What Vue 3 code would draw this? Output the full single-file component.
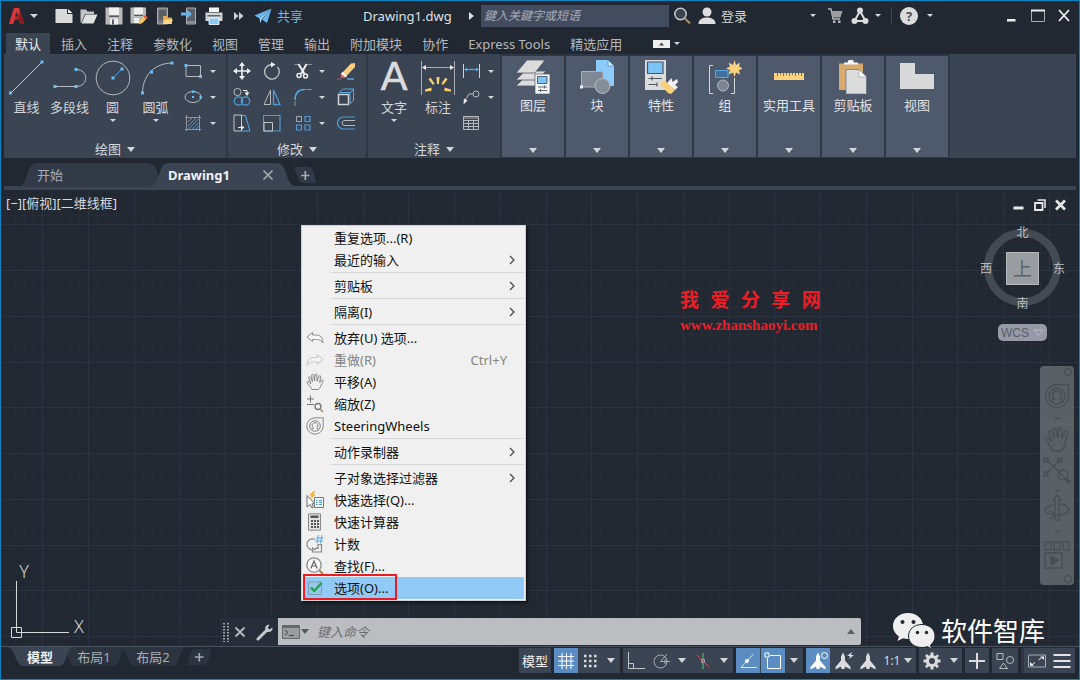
<script setup>
const ribbonTabs = ['默认', '插入', '注释', '参数化', '视图', '管理', '输出', '附加模块', '协作', 'Express Tools', '精选应用']

const quickTools = [
  { icon: 'new', label: '新建' },
  { icon: 'open', label: '打开' },
  { icon: 'save', label: '保存' },
  { icon: 'saveas', label: '另存为' },
  { icon: 'webopen', label: '从 Web 打开' },
  { icon: 'websave', label: '保存到 Web' },
  { icon: 'print', label: '打印' },
]

const drawTools = [
  { icon: 'line', label: '直线' },
  { icon: 'pline', label: '多段线' },
  { icon: 'circle', label: '圆', more: true },
  { icon: 'arc', label: '圆弧', more: true },
]
const drawSmall = ['rect', 'ellipse', 'hatch']

const modifyTools = [
  'move', 'rotate', 'trim', 'caret', 'erase',
  'copy', 'mirror', 'fillet', 'caret', 'explode',
  'stretch', 'scale', 'array', 'caret', 'offset',
]

const panels = [
  { icon: 'layers', label: '图层' },
  { icon: 'block', label: '块' },
  { icon: 'props', label: '特性' },
  { icon: 'group', label: '组' },
  { icon: 'ruler', label: '实用工具' },
  { icon: 'clip', label: '剪贴板' },
  { icon: 'view', label: '视图' },
]

const menu = [
  { label: '重复选项...(R)' },
  { label: '最近的输入', sub: true },
  { sep: true },
  { label: '剪贴板', sub: true },
  { sep: true },
  { label: '隔离(I)', sub: true },
  { sep: true },
  { label: '放弃(U) 选项...', icon: 'undo' },
  { label: '重做(R)', icon: 'redo', key: 'Ctrl+Y', off: true },
  { label: '平移(A)', icon: 'pan' },
  { label: '缩放(Z)', icon: 'zoom' },
  { label: 'SteeringWheels', icon: 'wheel' },
  { sep: true },
  { label: '动作录制器', sub: true },
  { sep: true },
  { label: '子对象选择过滤器', sub: true },
  { label: '快速选择(Q)...', icon: 'qselect' },
  { label: '快速计算器', icon: 'calc' },
  { label: '计数', icon: 'count' },
  { label: '查找(F)...', icon: 'find' },
  { label: '选项(O)...', icon: 'check', active: true },
]

const STEP = 9.15
function gridPath(major) {
  let d = ''
  for (let k = -4; k < 300; k++) {
    if ((k % 5 === 0) !== major) continue
    d += `M${Math.round(41.3 + k * STEP) + 0.5} 0V2000`
    d += `M0 ${Math.round(34.4 + k * STEP) + 0.5}H3000`
  }
  return d
}
const minorGrid = gridPath(false)
const majorGrid = gridPath(true)
</script>

<template>
  <div class="window">
    <svg class="defs" aria-hidden="true">
      <symbol id="logo" viewBox="0 0 16 18">
        <path d="M5 1H10L15.500 17H11L9.500 12.500H6L4 17H0Z" fill="#b3262b" />
        <path d="M5 1H10L11 5L7 9L4 17H0Z" fill="#d8383c" />
        <path d="M7.500 4.500L9 9.500H6Z" fill="#212831" />
        <path d="M11 5L15.500 17H11L9.500 12Z" fill="#8c1a20" />
      </symbol>
      <symbol id="new" viewBox="0 0 18 18">
        <path d="M.5 2H12V7H17.500V16H.5Z" fill="#d9d9d9" /><path d="M13 2L17.500 6H13Z" fill="#f2f2f2" />
      </symbol>
      <symbol id="open" viewBox="0 0 18 18">
        <path d="M.5 2.500H6L7.500 4.500H14V7H5L1.500 15.500H.5Z" fill="#c4c4c4" /><path d="M5.500 7.500H17.500L13.500 16.500H1.500Z" fill="#e2e2e2" />
      </symbol>
      <symbol id="save" viewBox="0 0 18 18">
        <path d="M.5 .5H17.500V17.500H.5Z" fill="#b9b9b9" /><path d="M4 .5H14V8H4ZM5 11.500H13V17.500H5Z" fill="#f0f0f0" /><path d="M4 8.500H14V10H4ZM7 12.500H9V17.500H7Z" fill="#5a5d62" />
      </symbol>
      <symbol id="saveas" viewBox="0 0 18 18">
        <path d="M.5 .5H16V9L9 16.500H.5Z" fill="#b9b9b9" /><path d="M4 .5H13V7H4ZM4 11H9V16H4Z" fill="#f0f0f0" /><path d="M4 8H13V9H4Z" fill="#5a5d62" />
        <path d="M8.500 17.500L10 13.500L15 8L17.500 10.500L12.500 16Z" fill="#f3c35f" /><path d="M15 8L17.500 10.500L16 12L13.500 9.500Z" fill="#e5484d" />
      </symbol>
      <symbol id="webopen" viewBox="0 0 18 18">
        <path d="M2.500 1H12.500V17H2.500Z" fill="#777a7e" stroke="#a9abae" /><path d="M4 3H11V13H4Z" fill="#5c5f64" />
        <path d="M8 9H12L13 10.500H17V17H8Z" fill="#e0a94e" /><path d="M10 12.500H18L16 17H8Z" fill="#ffd98a" />
      </symbol>
      <symbol id="websave" viewBox="0 0 18 18">
        <path d="M6.500 1H15.500V17H6.500Z" fill="#5c5f64" stroke="#a9abae" /><path d="M7 14H15V16.500H7Z" fill="#898c90" />
        <path d="M1 5.500H7V2.500L12 7L7 11.500V8.500H1Z" fill="#64b4ee" />
      </symbol>
      <symbol id="print" viewBox="0 0 18 18">
        <path d="M4 .5H14V5H4Z" fill="#f4f4f4" /><path d="M.5 5.500H17.500V14H.5Z" fill="#d3d3d3" /><path d="M2.500 8H15.500V9.500H2.500Z" fill="#62666c" /><path d="M4 11H14V17.500H4Z" fill="#8cc8f4" stroke="#fff" stroke-width=".8" />
      </symbol>
      <symbol id="plane" viewBox="0 0 18 16">
        <path d="M.5 7.500L17.500 .5L5.500 10.500Z" fill="#65b5f2" /><path d="M17.500 .5L13 15L8 11.500Z" fill="#65b5f2" /><path d="M5.500 10.500L17 1L7.500 11.500L6.500 15.500Z" fill="#a7d4f7" />
      </symbol>

      <symbol id="line" viewBox="0 0 36 36">
        <path d="M2 33L33 2" stroke="#c6c8cb" fill="none" /><path d="M0 31.500H3V34.500H0ZM31.500 .5H34.500V3.500H31.500Z" fill="#69bdf8" />
      </symbol>
      <symbol id="pline" viewBox="0 0 36 36">
        <path d="M3 26.500H24C37 26.500 37 9.500 24 9.500" stroke="#b6b9bd" fill="none" /><path d="M1.500 25H4.500V28H1.500ZM22.500 25H25.500V28H22.500ZM22.500 8H25.500V11H22.500Z" fill="#69bdf8" />
      </symbol>
      <symbol id="circle" viewBox="0 0 36 36">
        <circle cx="18" cy="18" r="16.800" stroke="#b6b9bd" fill="none" /><path d="M18 18L27 9" stroke="#4a9bd8" /><path d="M16.500 16.500H19.500V19.500H16.500ZM25.500 7.500H28.500V10.500H25.500Z" fill="#69bdf8" />
      </symbol>
      <symbol id="arc" viewBox="0 0 36 36">
        <path d="M4.500 33C4.500 18 14 3.500 34 3" stroke="#b6b9bd" fill="none" /><path d="M3 31.500H6V34.500H3ZM12 10.500H15V13.500H12ZM32.500 1.500H35.500V4.500H32.500Z" fill="#69bdf8" />
      </symbol>
      <symbol id="rect" viewBox="0 0 18 18">
        <path d="M2 3.500H16.500V14.500H2Z" stroke="#b6b9bd" fill="none" /><path d="M.5 2H3.500V5H.5ZM15 13H18V16H15Z" fill="#69bdf8" />
      </symbol>
      <symbol id="ellipse" viewBox="0 0 18 18">
        <ellipse cx="9" cy="9" rx="8" ry="5.500" stroke="#b6b9bd" fill="none" /><path d="M8 8H10V10H8ZM8 2.500H10.500V5H8ZM15.500 8H18V10.500H15.500Z" fill="#69bdf8" />
      </symbol>
      <symbol id="hatch" viewBox="0 0 18 18">
        <path d="M2.500 1V17M15.500 1V17M1 3.500H17M1 15.500H17" stroke="#90959c" /><path d="M4 8L8 4M4 12L12 4M4.500 15L14.500 5M8.500 15L14.500 9M12 15L14.500 12.500" stroke="#4f9bd6" />
      </symbol>
      <symbol id="move" viewBox="0 0 18 18">
        <path d="M9 2V16M2 9H16" stroke="#f0f0f0" stroke-width="1.600" /><path d="M9 0L12 4H6ZM9 18L6 14H12ZM0 9L4 6V12ZM18 9L14 12V6Z" fill="#f0f0f0" />
      </symbol>
      <symbol id="rotate" viewBox="0 0 18 18">
        <path d="M14.500 5A7.300 7.300 0 1 1 8 2.500" stroke="#c3c5c8" fill="none" stroke-width="1.300" /><path d="M8 0L12.500 2.500L8 5.500Z" fill="#f0f0f0" />
      </symbol>
      <symbol id="trim" viewBox="0 0 18 18">
        <path d="M.5 2.500H5M12 2.500H18" stroke="#8b9098" /><path d="M4.500 2L10.500 12M12.500 2L7 12" stroke="#eee" stroke-width="2" /><circle cx="5" cy="13.500" r="2" fill="none" stroke="#eee" stroke-width="1.500" /><circle cx="11.500" cy="14" r="2" fill="none" stroke="#eee" stroke-width="1.500" />
      </symbol>
      <symbol id="erase" viewBox="0 0 18 18">
        <path d="M0 17H4" stroke="#b55" /><path d="M10 17H17" stroke="#57a8e3" stroke-width="1.500" /><path d="M5 11L14 1.500L18 1V5L9 14.500Z" fill="#f6cf7e" /><path d="M3.500 12.500L5 11L9 14.500L7 16H4Z" fill="#ef5a5a" /><path d="M5.500 10L10 14L8.500 15.500L4 11.500Z" fill="#fff" />
      </symbol>
      <symbol id="copy" viewBox="0 0 18 18">
        <circle cx="4.500" cy="4" r="3.600" stroke="#b6b9bd" fill="none" /><circle cx="5.500" cy="13" r="4.200" stroke="#4f9bd6" fill="none" stroke-width="1.300" /><circle cx="12.500" cy="13" r="4.200" stroke="#4f9bd6" fill="none" stroke-width="1.300" /><path d="M10 2.500H14V5" stroke="#eee" fill="none" /><path d="M11.500 4.500H16.500L14 8Z" fill="#eee" />
      </symbol>
      <symbol id="mirror" viewBox="0 0 18 18">
        <path d="M7.500 2V16.500H1Z" stroke="#b6b9bd" fill="none" /><path d="M10.500 2V16.500H17Z" stroke="#4f9bd6" fill="none" stroke-width="1.300" />
      </symbol>
      <symbol id="fillet" viewBox="0 0 18 18">
        <path d="M1 12C1 5 5 1.500 11 1.500" stroke="#57a8e3" fill="none" stroke-width="1.500" /><path d="M12 1.500H17.500M1 13V18" stroke="#8b9098" />
      </symbol>
      <symbol id="explode" viewBox="0 0 18 18">
        <path d="M1.500 6.500H11.500V16.500H1.500Z" stroke="#d0d2d4" fill="none" stroke-width="1.500" /><path d="M1.500 5L6 1H16.500V12L13 16M13 5L16.500 1M3 4.500H13V15" stroke="#57a8e3" fill="none" />
      </symbol>
      <symbol id="stretch" viewBox="0 0 18 18">
        <path d="M8.500 1H1V17H8.500ZM8.500 1V12" stroke="#c3c5c8" fill="none" /><path d="M9 1.500H12.500L17 17H9" stroke="#57a8e3" fill="none" /><path d="M5 13.500H9" stroke="#eee" /><path d="M8 11L11.500 13.500L8 16Z" fill="#eee" />
      </symbol>
      <symbol id="scale" viewBox="0 0 18 18">
        <path d="M.5 1.500H17V17H.5Z" stroke="#4f9bd6" fill="none" stroke-width="1.200" /><path d="M1 8.500H9.500V17H1Z" stroke="#c3c5c8" fill="none" />
      </symbol>
      <symbol id="array" viewBox="0 0 18 18">
        <path d="M2.500 2.500H7.500V7.500H2.500Z" stroke="#a6aab0" fill="none" /><path d="M11 2.500H16V7.500H11ZM2.500 11H7.500V16H2.500ZM11 11H16V16H11Z" stroke="#4f9bd6" fill="none" stroke-width="1.200" />
      </symbol>
      <symbol id="offset" viewBox="0 0 18 18">
        <path d="M18 3H6.500A6 6 0 0 0 6.500 15H18" stroke="#4f9bd6" fill="none" stroke-width="1.200" /><path d="M18 6.500H7A2.600 2.600 0 0 0 7 11.500H18" stroke="#b6b9bd" fill="none" />
      </symbol>

      <symbol id="dim" viewBox="0 0 36 36">
        <path d="M1.500 1V35M34.500 1V35M3 7.500H33" stroke="#a9adb2" fill="none" /><path d="M2 7.500L6 5V10ZM34 7.500L30 5V10Z" fill="#eee" />
        <g fill="#f9cd6c"><path d="M16.500 17H19.500L19 24H17Z" /><path d="M8.500 19.500L10.500 17.500L14.500 23.500L13 25Z" /><path d="M27.500 19.500L25.500 17.500L21.500 23.500L23 25Z" /><path d="M5 31.500V29.500L11.500 27.500V31Z" /><path d="M31 31.500V29.500L24.500 27.500V31Z" /></g>
      </symbol>
      <symbol id="dimlin" viewBox="0 0 18 18">
        <path d="M1.500 2V16M17.500 2V16" stroke="#d0d2d4" /><path d="M3 7.500H16" stroke="#57a8e3" stroke-width="1.300" /><path d="M2 7.500L5 5.500V9.500ZM17 7.500L14 5.500V9.500Z" fill="#57a8e3" />
      </symbol>
      <symbol id="leader" viewBox="0 0 18 18">
        <path d="M2 14L7 6H11" stroke="#b6b9bd" fill="none" /><circle cx="14" cy="6" r="3" stroke="#b6b9bd" fill="none" /><path d="M1.500 16.500L2 10.500L5.500 12.500Z" fill="#eee" />
      </symbol>
      <symbol id="table" viewBox="0 0 18 18">
        <path d="M1.500 2.500H16.500V15.500H1.500ZM1.500 6.500H16.500M1.500 9.500H16.500M1.500 12.500H16.500M6.500 6.500V15.500M11.500 6.500V15.500" stroke="#b6b9bd" fill="none" /><path d="M2 3H16V5H2Z" fill="#6b7280" />
      </symbol>

      <symbol id="layers" viewBox="0 0 34 34">
        <g fill="#dcdcdc" stroke="#4e5a6c" stroke-width=".8"><path d="M0 26L8 18H30L22 26Z" /><path d="M0 20L9 11H30L21 20Z" /><path d="M0 13L11 0H29L19 13Z" /></g>
        <path d="M19 14H34V34H19Z" fill="#f4f4f4" stroke="#4e5a6c" stroke-width=".7" /><path d="M21.500 16.500H31V23.500H21.500Z" fill="#7cc3f8" stroke="#5b6470" /><path d="M22 27H31M22 30.500H31M28.500 25.500V28.500M24.500 29V32" stroke="#5b6470" />
      </symbol>
      <symbol id="block" viewBox="0 0 34 34">
        <path d="M16 0H28L34 6V26H16Z" fill="#8ccbfa" /><path d="M28 0L34 6H28Z" fill="#d3ebfd" stroke="#4e8fc0" stroke-width=".7" />
        <path d="M1.500 11.500H23V27H1.500Z" fill="#7f8894" stroke="#aeb2b8" /><circle cx="22.500" cy="26" r="7.500" fill="#848d98" stroke="#b9bcc0" /><path d="M0 25.500H3V28.500H0Z" fill="#eee" />
      </symbol>
      <symbol id="props" viewBox="0 0 34 34">
        <path d="M1 0H22V30H1Z" fill="#dcdcdc" /><path d="M3.500 2H19V13.500H3.500Z" fill="#7cc3f8" stroke="#4d5763" stroke-width="1.200" /><path d="M4.500 18.500H18M4.500 24.500H13M8 16.500V20.500M13 22.500V26.500" stroke="#4d5763" stroke-width="1.200" />
        <path d="M16 24L20 20L31 30L27 34L24 33Z" fill="#fbd07a" /><path d="M23 23L27.500 18L28.500 22L33 19L34 22L31 25L34 27L31 30Z" fill="#f2f2f2" />
      </symbol>
      <symbol id="group" viewBox="0 0 34 34">
        <path d="M5 5.500H1.500V33.500H5M23 33.500H26.500V18" stroke="#d5d7d9" fill="none" /><path d="M7.500 10.500H20V17.500H7.500Z" fill="#426f99" stroke="#57a8e3" /><circle cx="15" cy="25.500" r="5.500" fill="#7d8692" stroke="#b5b8bd" />
        <path d="M26.500 0L28 5L32 2.500L31 6.500L35 8.500L31 10L32 14.500L28 12.500L26.500 17L25 12.500L20.500 14.500L22 10L18 8.500L22 6.500L20.500 2.500L25 5Z" fill="#fcd37c" />
      </symbol>
      <symbol id="ruler" viewBox="0 0 34 34">
        <path d="M2 13H32V20H2Z" fill="#fcd27a" /><path d="M5.500 13V16M8.500 13V15M11.500 13V16M14.500 13V15M17.500 13V16M20.500 13V15M23.500 13V16M26.500 13V15M29.500 13V16" stroke="#6b5a35" stroke-width=".8" />
      </symbol>
      <symbol id="clip" viewBox="0 0 34 34">
        <path d="M3 3.500H27V30H3Z" fill="#d8ab6e" /><path d="M8 4.500H22V2.500H18L17 0H12.500L11.500 2.500H8Z" fill="#f4f4f4" /><path d="M10 9.500H23L30.500 17V34H10Z" fill="#dcdcdc" stroke="#596373" stroke-width=".6" /><path d="M23 9.500L30.500 17H23Z" fill="#fff" stroke="#8b9098" stroke-width=".6" />
      </symbol>
      <symbol id="view" viewBox="0 0 34 34"><path d="M0 3H15V14H34V29H0Z" fill="#d9d9d9" /></symbol>

      <symbol id="undo" viewBox="0 0 18 18"><path d="M1 8L6.500 3.500V6H10C14.500 6 16.500 8.500 17 14C14.500 10.500 12 10.500 9.500 10.500H6.500V12.500Z" fill="#f7f7f7" stroke="#8d8d8d" /></symbol>
      <symbol id="redo" viewBox="0 0 18 18"><path d="M17 8.500L11.500 4V6.500H8C3.500 6.500 1.500 9 1 14.500C3.500 11 6 11 8.500 11H11.500V13Z" fill="#f3f3f3" stroke="#c6c6c6" /></symbol>
      <symbol id="pan" viewBox="0 0 18 18"><path d="M6 16.500C4.500 13.500 2.500 12 1 9.500C.7 8.300 2 8 3 9L5 10.500L2.700 5C2.400 3.600 4 3.300 4.500 4.500L6.500 8.500L5.600 2.500C5.600 1 7.300 1 7.600 2.300L8.600 8L9 1.800C9.200 .5 10.800 .6 10.900 2L11 8.200L13 3.200C13.600 2 15 2.600 14.700 4L13.600 9.500L15.600 7.300C16.500 6.500 17.500 7.300 16.900 8.500C15.500 11 15 14 12.500 16.500Z" fill="none" stroke="currentColor" /></symbol>
      <symbol id="zoom" viewBox="0 0 18 18"><path d="M1 4H8M4.500 .5V7.500M1 9.500H8" stroke="#777" fill="none" /><circle cx="12" cy="11.500" r="3" stroke="#777" stroke-width="1.300" fill="none" /><path d="M14.200 13.800L17 17" stroke="#b59a62" stroke-width="1.800" /></symbol>
      <symbol id="wheel" viewBox="0 0 18 18"><path d="M9 .8H17.200V9A8.200 8.200 0 1 1 9 .8Z" fill="none" stroke="currentColor" /><circle cx="9" cy="9" r="5.300" fill="none" stroke="currentColor" /><path d="M6 13.300V11.500L7.500 11A2.900 2.900 0 1 1 10.500 11L12 11.500V13.300" fill="none" stroke="currentColor" /></symbol>
      <symbol id="qselect" viewBox="0 0 18 18"><path d="M1 4.500V16L4 13.500L6 17L7.500 16L5.800 12.800H9Z" fill="#fff" stroke="#666" /><path d="M7.500 0L3 4.500H5.500L4 8.500L10 3.500H7.500L9 0Z" fill="#f9b233" /><path d="M8.500 6.500H17.500V16.500H8.500Z" fill="#f7f7f7" stroke="#777" /><path d="M10 9.500H11.500M13 9.500H16M10 11.500H11.500M13 11.500H16M10 13.500H11.500M13 13.500H16" stroke="#3f9be0" /></symbol>
      <symbol id="calc" viewBox="0 0 18 18"><path d="M2.500 .8H14.500V17.200H2.500Z" fill="#e2e2e2" stroke="#8a8a8a" /><path d="M4.500 2.500H12.500V5H4.500Z" fill="#555" /><path d="M5 7H7V9H5ZM8 7H10V9H8ZM11 7H13V9H11ZM5 10H7V12H5ZM8 10H10V12H8ZM11 10H13V12H11ZM5 13H7V15H5ZM8 13H10V15H8ZM11 13H13V15H11Z" fill="#555" /></symbol>
      <symbol id="count" viewBox="0 0 18 18"><path d="M9 4.500A5.500 5.500 0 1 0 11 12.500M6.500 12V17H15.500V9.500H12V13.500H8" fill="none" stroke="#8a8a8a" stroke-width="1.200" /><path d="M12.500 0L11 8.500M16 0L14.500 8.500M10 3H17.500M9.500 6H17" stroke="#57a8e3" /></symbol>
      <symbol id="find" viewBox="0 0 18 18"><circle cx="8" cy="8" r="7.200" fill="#f8f8f8" stroke="#8a8a8a" stroke-width="1.300" /><path d="M4.800 11.500L8 4L11.200 11.500M6 9H10" stroke="#666" fill="none" stroke-width="1.200" /><path d="M13.500 13.500L17 17" stroke="#a18452" stroke-width="2" /></symbol>
      <symbol id="check" viewBox="0 0 18 18"><path d="M2.500 3H15.500V15.500H2.500Z" fill="#9ac6ea" stroke="#7b9bb6" /><path d="M5 8.500L8.200 12L15.500 4" fill="none" stroke="#1aa84a" stroke-width="2.500" /></symbol>

      <symbol id="annot" viewBox="0 0 18 18"><path d="M9 .5L11 4.500V8.500L16.500 15V17.500L11 14.500L10.500 17H7.500L7 14.500L1.500 17.500V15L7 8.500V4.500Z" fill="currentColor" /></symbol>
      <symbol id="gear" viewBox="0 0 18 18"><path d="M7.500 .5H10.500V3.200L12.600 4L14.500 2.200L16 4L14.200 5.800L15 7.500H17.500V10.500H15L14.200 12.600L16 14.200L14 16.200L12.200 14.300L10.500 15V17.500H7.500V15L5.600 14.300L3.800 16.200L2 14.200L3.700 12.400L3 10.500H.5V7.500H3L3.700 5.700L2 3.900L3.900 2L5.700 3.800L7.500 3ZM9 6A3 3 0 1 0 9 12A3 3 0 1 0 9 6Z" fill="#dcdcdc" fill-rule="evenodd" /></symbol>
    </svg>

    <header class="titlebar">
      <button class="flat app-btn" aria-label="应用程序菜单"><svg class="logo"><use href="#logo" /></svg><i class="caret"></i></button>
      <div class="quick">
        <button v-for="q in quickTools" :key="q.icon" class="flat" :aria-label="q.label"><svg class="i18"><use :href="'#' + q.icon" /></svg></button>
      </div>
      <button class="flat more" aria-label="更多"><svg width="10" height="10" viewBox="0 0 10 10"><path d="M0 1L4.500 5L0 9ZM5 1L9.500 5L5 9Z" fill="#d0d2d4" /></svg></button>
      <button class="flat share"><svg width="18" height="16"><use href="#plane" /></svg>共享</button>
      <div class="doc">
        <span class="doc-name">Drawing1.dwg</span>
        <svg width="6" height="10" viewBox="0 0 6 10"><path d="M0 1L5 5L0 9Z" fill="#e0e0e0" /></svg>
      </div>
      <input class="search" type="text" placeholder="鍵入关鍵字或短语" aria-label="搜索" />
      <button class="flat find-btn" aria-label="搜索"><svg width="18" height="18" viewBox="0 0 18 18"><circle cx="7.500" cy="7" r="5.700" fill="#3b434e" stroke="#c9cbce" stroke-width="1.500" /><path d="M12 11.500L17 16.500" stroke="#b78f5c" stroke-width="2" /></svg></button>
      <button class="flat login"><svg width="18" height="18" viewBox="0 0 18 18"><circle cx="9" cy="5" r="4.500" fill="#dedede" /><path d="M.5 17C.5 12 5 10.500 9 10.500S17.500 12 17.500 17Z" fill="#dedede" /></svg>登录</button>
      <div class="tb-right">
        <button class="flat" aria-label="账户选项"><i class="caret sm"></i></button>
        <button class="flat cart" aria-label="购物车"><svg width="15" height="16" viewBox="0 0 15 16"><path d="M0 1H3L5 11H12" fill="none" stroke="#b5b5b5" stroke-width="1.300" /><path d="M3.500 3H14.500L12.500 9.500H5Z" fill="#9d9d9d" /><path d="M5 12.500H7.500V15H5ZM10 12.500H12.500V15H10Z" fill="#b5b5b5" /></svg></button>
        <button class="flat a360" aria-label="Autodesk 应用"><svg width="18" height="18" viewBox="0 0 18 18"><path d="M9 4L3.500 14H14.500Z" fill="none" stroke="#dcdcdc" stroke-width="2" /><circle cx="9" cy="3.500" r="3" fill="#dcdcdc" /><circle cx="3.500" cy="14" r="3" fill="#dcdcdc" /><circle cx="14.500" cy="14" r="3" fill="#dcdcdc" /></svg><i class="caret sm"></i></button>
        <span class="divider"></span>
        <button class="flat help"><span class="q">?</span><i class="caret sm"></i></button>
        <div class="win">
          <button class="flat" aria-label="最小化"><svg width="12" height="14" viewBox="0 0 12 14"><path d="M1 10H9.500V12.500H1Z" fill="#eee" /></svg></button>
          <button class="flat" aria-label="最大化"><svg width="14" height="14" viewBox="0 0 14 14"><path d="M.5 1.500H13.500V12.500H.5Z" fill="none" stroke="#a8abae" /><path d="M0 .5H14V2.500H0Z" fill="#eee" /></svg></button>
          <button class="flat" aria-label="关闭"><svg width="12" height="14" viewBox="0 0 12 14"><path d="M1 1L11 12M11 1L1 12" stroke="#eee" stroke-width="1.800" /></svg></button>
        </div>
      </div>
    </header>

    <nav class="rtabs">
      <button v-for="(t, i) in ribbonTabs" :key="t" class="rtab" :class="{ on: i === 0 }">{{ t }}</button>
      <button class="flat rmin" aria-label="最小化功能区"><svg width="17" height="8" viewBox="0 0 17 8"><path d="M0 0H17V8H0Z" fill="#efefef" /><path d="M6 5.500L8.500 2.500L11 5.500Z" fill="#444" /></svg><i class="caret sm"></i></button>
    </nav>

    <section class="ribbon">
      <div class="panel draw">
        <div class="tools">
          <button v-for="t in drawTools" :key="t.icon" class="big"><svg class="i36"><use :href="'#' + t.icon" /></svg><span>{{ t.label }}</span><i v-if="t.more" class="caret sm"></i></button>
          <div class="smalls">
            <button v-for="s in drawSmall" :key="s" class="flat small" :aria-label="s"><svg class="i18"><use :href="'#' + s" /></svg><i class="caret sm"></i></button>
          </div>
        </div>
        <button class="flat title">绘图<i class="caret lg"></i></button>
      </div>
      <div class="panel modify">
        <div class="mgrid">
          <button v-for="(m, i) in modifyTools" :key="i" class="flat" :aria-label="m"><i v-if="m === 'caret'" class="caret sm"></i><svg v-else class="i18"><use :href="'#' + m" /></svg></button>
        </div>
        <button class="flat title">修改<i class="caret lg"></i></button>
      </div>
      <div class="panel annotate">
        <div class="tools">
          <button class="big"><svg class="i36" viewBox="0 0 36 36"><text x="18" y="30" text-anchor="middle" font-family="Liberation Sans, sans-serif" font-size="40" fill="#dcdcdc" stroke="#dcdcdc" stroke-width=".6">A</text></svg><span>文字</span><i class="caret sm"></i></button>
          <button class="big"><svg class="i36"><use href="#dim" /></svg><span>标注</span></button>
          <div class="smalls">
            <button class="flat small" aria-label="线性标注"><svg class="i18"><use href="#dimlin" /></svg><i class="caret sm"></i></button>
            <button class="flat small" aria-label="引线"><svg class="i18"><use href="#leader" /></svg><i class="caret sm"></i></button>
            <button class="flat small" aria-label="表格"><svg class="i18"><use href="#table" /></svg></button>
          </div>
        </div>
        <button class="flat title">注释<i class="caret lg"></i></button>
      </div>
      <div class="folded">
        <button v-for="p in panels" :key="p.icon" class="fold"><svg class="i34"><use :href="'#' + p.icon" /></svg><span>{{ p.label }}</span><i class="caret lg"></i></button>
      </div>
    </section>

    <nav class="ftabs">
      <button class="ftab start"><svg class="shape" viewBox="0 0 142 24"><path d="M0 24C7 22 8 14 10 9C12 3 14 0 20 0H128C136 0 138 5 140 11L142 24Z" fill="#323a47" /></svg><span>开始</span></button>
      <button class="ftab drawing"><svg class="shape" viewBox="0 0 146 24"><path d="M0 24C7 22 8 14 10 9C12 3 14 0 20 0H126C132 0 134 4 136 10C138 17 140 22 146 24Z" fill="#3b4453" /></svg><b>Drawing1</b><svg class="x" width="12" height="12" viewBox="0 0 12 12"><path d="M1.500 1.500L10.500 10.500M10.500 1.500L1.500 10.500" stroke="#a6abb2" stroke-width="1.700" /></svg></button>
      <button class="ftab add" aria-label="新图形"><svg width="22" height="16" viewBox="0 0 22 16"><path d="M0 0H14C19 0 20 5 22 16H10C4 16 3 8 0 0Z" fill="#323a47" /><path d="M7 8.500H15.500M11.300 4V13" stroke="#a6abb2" stroke-width="1.700" /></svg></button>
    </nav>

    <main class="canvas">
      <svg class="grid" aria-hidden="true"><path :d="minorGrid" stroke="#252c35" /><path :d="majorGrid" stroke="#2c3340" /></svg>
      <div class="vp-label">[−][俯视][二维线框]</div>

      <div class="vp-win">
        <button class="flat" aria-label="最小化视口"><svg width="12" height="12" viewBox="0 0 12 12"><path d="M.5 7.500H10.500V10.500H.5Z" fill="#e8e8e8" /></svg></button>
        <button class="flat" aria-label="还原视口"><svg width="12" height="12" viewBox="0 0 12 12"><path d="M1 4H8.500V11H1Z" fill="none" stroke="#e8e8e8" stroke-width="1.800" /><path d="M3.500 1H11V9" fill="none" stroke="#e8e8e8" stroke-width="1.500" /></svg></button>
        <button class="flat" aria-label="关闭视口"><svg width="12" height="12" viewBox="0 0 12 12"><path d="M1 1.500L10 10.500M10 1.500L1 10.500" stroke="#e8e8e8" stroke-width="2.600" /></svg></button>
      </div>

      <div class="viewcube">
        <span>北</span>
        <div class="mid"><span>西</span><button class="cube">上</button><span>东</span></div>
        <span>南</span>
      </div>
      <button class="wcs">WCS<svg width="11" height="8" viewBox="0 0 11 8"><path d="M1 1H10L5.500 6.500Z" fill="none" stroke="#b8bac2" /></svg></button>

      <div class="navbar">
        <svg width="34" height="219" viewBox="0 0 34 219" fill="none" stroke="#484e54" stroke-width="1.300">
          <circle cx="28" cy="6" r="3.500" /><circle cx="28" cy="213" r="3.500" />
          <path d="M17 18.500H28.500V30A11.500 11.500 0 1 1 17 18.500Z" /><circle cx="17" cy="30" r="8" /><path d="M12 36.500V34L14.500 33A4.500 4.500 0 1 1 19.500 33L22 34V36.500" />
          <path d="M15 51L17.500 53L20 51M15 124L17.500 126L20 124M15 164L17.500 166L20 164" />
          <path d="M0 58H34" stroke="#62686d" stroke-width="1" />
          <path d="M13 85C11 80 7 77 5.500 73.500C5 71.500 7 71 9 73L12 75.500L8.500 67C8 64.500 10.500 64.500 11.500 66.500L14.500 72.500L13.500 64C13.500 61.500 16 61.500 16.500 63.500L17.500 72L19 63C19.500 61 22 61.500 22 63.500L21.500 73L25 66C26 64 28.500 65 28 67L25 77C24 82 23 84 21 85Z" />
          <path d="M6 93L27 114M20 94L6 108M4 92H8V96H4ZM18 92H22V96H18ZM4 106H8V110H4Z" /><circle cx="23" cy="109" r="5" /><path d="M26.500 113L30 117" stroke-width="3" />
          <path d="M15 154V134H13L17 129L21 134H19V154ZM21 138C32 140 32 149 17 149C3 149 1 142 13 139M10 145L15 149L10 153" /><path d="M5 176H11V184H5ZM14 176H20V184H14ZM23 176H29V184H23ZM5 187H22V202H5Z" /><path d="M11 190V199L18 194.500Z" fill="#484e54" />
        </svg>
      </div>

      <svg class="ucs" width="80" height="78" viewBox="0 0 80 78" fill="none" stroke="#d5d7d9">
        <path d="M6.500 17V68.500H59M1.500 63.500H11.500V73.500H1.500Z" />
        <text x="14" y="14" text-anchor="middle" font-family="Noto Sans, sans-serif" font-size="18" font-weight="300" fill="#d5d7d9" stroke="none">Y</text>
        <text x="69" y="69" text-anchor="middle" font-family="Noto Sans, sans-serif" font-size="18" font-weight="300" fill="#d5d7d9" stroke="none">X</text>
      </svg>

      <div class="mark">
        <strong>我 爱 分 享 网</strong>
        <em>www.zhanshaoyi.com</em>
      </div>

      <div class="menu" role="menu">
        <template v-for="(m, i) in menu" :key="i">
          <hr v-if="m.sep" />
          <button v-else class="item" role="menuitem" :class="{ active: m.active }" :disabled="m.off">
            <span class="gutter"><svg v-if="m.icon" class="i18"><use :href="'#' + m.icon" /></svg></span>
            <span class="text">{{ m.label }}</span>
            <span v-if="m.key" class="key">{{ m.key }}</span>
            <svg v-if="m.sub" class="sub" width="6" height="10" viewBox="0 0 6 10"><path d="M1 1L5 5L1 9" fill="none" stroke="#444" stroke-width="1.200" /></svg>
          </button>
        </template>
        <div class="frame"></div>
      </div>

      <div class="cmd">
        <div class="cmd-handle">
          <svg width="6" height="20" viewBox="0 0 6 20"><path d="M1 1V20M5 1V20" stroke="#c6c8cb" stroke-width="1.500" stroke-dasharray="1.500 1.500" /></svg>
          <button class="flat" aria-label="关闭命令行"><svg width="12" height="12" viewBox="0 0 12 12"><path d="M1.500 1.500L10.500 10.500M10.500 1.500L1.500 10.500" stroke="#b9bcc0" stroke-width="1.800" /></svg></button>
          <button class="flat" aria-label="自定义"><svg width="18" height="18" viewBox="0 0 18 18"><path d="M2 16L10.500 7.500" stroke="#c6c8cb" stroke-width="3" stroke-linecap="round" /><path d="M13.500 1.500C10 1.500 8.500 4.500 9.500 7.500L11 9C14 9.500 17 8 16.500 4.500L13.500 6.500L11.800 5Z" fill="#c6c8cb" /></svg></button>
        </div>
        <div class="cmd-box">
          <button class="flat recent" aria-label="最近使用的命令"><svg width="18" height="14" viewBox="0 0 18 14"><path d="M.5 .5H17.500V13.500H.5Z" fill="#9a9c9f" stroke="#66696d" /><path d="M.5 .5H17.500V3H.5Z" fill="#66696d" /><path d="M3 5L6 7.500L3 10M7 10.500H12" fill="none" stroke="#444" /></svg><i class="caret lg dark"></i></button>
          <input type="text" placeholder="键入命令" aria-label="命令行" />
          <button class="flat" aria-label="命令历史"><svg width="8" height="5" viewBox="0 0 8 5"><path d="M0 5L4 0L8 5Z" fill="#5d6063" /></svg></button>
        </div>
      </div>

      <div class="wechat">
        <svg width="42" height="36" viewBox="0 0 42 36">
          <path d="M15 0C6 0 0 6 0 13C0 17.500 2.500 21 6 23.500L4.500 28L10 25.300C13 26.300 17 26.300 19 25.600C28 25 30 18 30 13C30 6 24 0 15 0Z" fill="#efefef" />
          <path d="M29 11.500C21 11.500 15.500 16.500 15.500 23C15.500 29.500 21 34.500 29 34.500C31 34.500 33 34.200 34.500 33.600L38.500 36L37.500 32C40.300 30 42 27 42 23C42 16.500 36.500 11.500 29 11.500Z" fill="#efefef" stroke="#212830" />
          <g fill="#212830"><circle cx="9.500" cy="9" r="2" /><circle cx="20.500" cy="9" r="2" /><circle cx="24.500" cy="19.500" r="1.700" /><circle cx="33.500" cy="19.500" r="1.700" /></g>
        </svg>
        <span>软件智库</span>
      </div>
    </main>

    <footer class="footer">
      <nav class="ltabs">
        <button class="ltab on"><svg class="shape" viewBox="0 0 66 20"><path d="M0 0H66C60 5 62 20 52 20H17C7 20 8 5 0 0Z" fill="#3b4453" /></svg><b>模型</b></button>
        <button class="ltab"><svg class="shape" viewBox="0 0 66 20"><path d="M0 0H66C60 5 62 20 52 20H14C6 20 6 5 0 0Z" fill="#2c3440" /></svg><span>布局1</span></button>
        <button class="ltab"><svg class="shape" viewBox="0 0 66 20"><path d="M0 0H66C60 5 62 20 52 20H14C6 20 6 5 0 0Z" fill="#2c3440" /></svg><span>布局2</span></button>
        <button class="ltab plus" aria-label="新建布局"><svg width="24" height="16" viewBox="0 0 24 16"><path d="M6 0H24C23 8 21 16 15 16H0C3 12 2 3 6 0Z" fill="#2c3440" /><path d="M8 8H16.500M12.300 4V12.500" stroke="#a6abb2" stroke-width="1.600" /></svg></button>
      </nav>
      <div class="status">
        <button class="cell w32 model">模型</button>
        <div class="set">
          <button class="cell w24 on" aria-label="栅格"><svg class="i18" viewBox="0 0 18 18"><path d="M5 1V17M9.500 1V17M14 1V17M1 4.500H17M1 9H17M1 13.500H17" stroke="#fff" /></svg></button>
          <button class="cell w24" aria-label="捕捉"><svg class="i18" viewBox="0 0 18 18"><path d="M3 4H16M3 9H16M3 14H16" stroke="#dcdcdc" stroke-width="2.500" stroke-dasharray="2.500 2.500" /></svg></button>
          <button class="cell w18" aria-label="捕捉选项"><i class="caret lg"></i></button>
        </div>
        <div class="set">
          <button class="cell w26" aria-label="正交"><svg class="i18" viewBox="0 0 18 18"><path d="M1.500 0V16.500H18M1.500 11.500H6.500V16.500" stroke="#c0c3c7" fill="none" /></svg></button>
          <button class="cell w24" aria-label="极轴"><svg class="i18" viewBox="0 0 18 18"><circle cx="8.500" cy="9.500" r="6.500" stroke="#a9adb3" fill="none" /><path d="M8.500 9.500H18M8.500 9.500L15 2M13 7.500V12" stroke="#a9adb3" fill="none" /></svg></button>
          <button class="cell w18" aria-label="极轴选项"><i class="caret lg"></i></button>
          <button class="cell w24" aria-label="等轴测"><svg class="i18" viewBox="0 0 18 18"><path d="M9 1V17" stroke="#4fae6d" stroke-width="1.300" /><path d="M3 3L15 15" stroke="#c0585c" /><path d="M7.500 7.500H10.500V10.500H7.500Z" stroke="#9aa0a6" fill="none" /></svg></button>
          <button class="cell w18" aria-label="等轴测选项"><i class="caret lg"></i></button>
        </div>
        <div class="set">
          <button class="cell w24 on" aria-label="对象捕捉追踪"><svg class="i18" viewBox="0 0 18 18"><path d="M2 15.500L14 2.500M2 15.500H18" stroke="#dbe8f5" fill="none" /><circle cx="8" cy="9" r="2" fill="#fff" /></svg></button>
          <button class="cell w24 on" aria-label="对象捕捉"><svg class="i18" viewBox="0 0 18 18"><path d="M6 3.500H16.500V16.500H3.500V6M1 1H5V5H1Z" stroke="#fff" fill="none" /></svg></button>
          <button class="cell w18" aria-label="对象捕捉选项"><i class="caret lg"></i></button>
        </div>
        <div class="set">
          <button class="cell w24 on" aria-label="注释可见性"><svg class="i18 white"><use href="#annot" /></svg><svg class="badge" width="7" height="7" viewBox="0 0 7 7"><circle cx="3.500" cy="3.500" r="3" fill="none" stroke="#fff" /></svg></button>
          <button class="cell w26" aria-label="自动缩放"><svg class="i18"><use href="#annot" /></svg><svg class="badge" width="7" height="7" viewBox="0 0 7 7"><path d="M5 0L0 4H3L2 7L7 3H4Z" fill="#dcdcdc" /></svg></button>
          <button class="cell w24" aria-label="注释比例"><svg class="i18"><use href="#annot" /></svg></button>
          <button class="cell w36 ratio">1:1<i class="caret lg"></i></button>
        </div>
        <button class="cell w43" aria-label="切换工作空间"><svg class="i18"><use href="#gear" /></svg><i class="caret lg"></i></button>
        <button class="cell w24" aria-label="注释监视器"><svg class="i18" viewBox="0 0 18 18"><path d="M9 1V17M1 9H17" stroke="#dcdcdc" stroke-width="2" /></svg></button>
        <button class="cell w26" aria-label="隔离对象"><svg class="i18" viewBox="0 0 18 18"><path d="M1 1.500H7V7.500H1ZM7.500 11L11.500 16.500H3.500Z" stroke="#b9bcc0" fill="none" /><circle cx="14" cy="8" r="3.500" stroke="#b9bcc0" fill="none" /></svg></button>
        <div class="set tail">
          <button class="cell w24" aria-label="全屏"><svg class="i18" viewBox="0 0 18 18"><path d="M.5 3H17.500V15H.5Z" stroke="#a9adb3" fill="none" /><path d="M10.500 8L14.500 5M7 10.500L3 13.500" stroke="#eee" /><path d="M12 4.500H16V8ZM2 10V13.800H6Z" fill="#eee" /></svg></button>
          <button class="cell w26" aria-label="自定义"><svg class="i18" viewBox="0 0 18 18"><path d="M.5 3H17.500M.5 9H17.500M.5 15H17.500" stroke="#e4e4e4" stroke-width="1.800" /></svg></button>
        </div>
      </div>
    </footer>
  </div>
</template>

<style>
html, body { margin: 0; background: #212831; }
</style>

<style scoped>
.window {
  min-height: 100vh; box-sizing: border-box; display: flex; flex-direction: column;
  border: 1px solid #0b84c0; background: #212831; color: #d3d6da; overflow: hidden;
  font: 13px/16px "Noto Sans", "Noto Sans CJK SC", sans-serif;
}
.defs { position: absolute; width: 0; height: 0; }
button { font: inherit; color: inherit; margin: 0; padding: 0; border: 0; background: none; white-space: nowrap; }
button svg, i { flex: none; }
.flat { display: flex; align-items: center; justify-content: center; }
.i18 { width: 18px; height: 18px; display: block; }
.i34 { width: 34px; height: 34px; display: block; }
.i36 { width: 36px; height: 36px; display: block; overflow: visible; }
.caret { width: 0; height: 0; border: solid transparent; border-width: 4px 4px 0; border-top-color: #d3d6da; }
.caret.sm { border-width: 3px 3px 0; }
.caret.lg { border-width: 5px 4px 0; }
.caret.dark { border-top-color: #55585c; }

.titlebar { display: flex; align-items: center; height: 29px; }
.app-btn { gap: 5px; margin-left: 8px; }
.logo { width: 16px; height: 18px; }
.quick { display: flex; gap: 7px; margin-left: 17px; }
.more { margin-left: 11px; }
.share { gap: 5px; margin-left: 10px; color: #6fb4ea; }
.doc { display: flex; align-items: center; justify-content: space-between; width: 112px; margin: 0 6px 0 60px; color: #dfe1e4; }
.search {
  box-sizing: border-box; width: 188px; height: 22px; padding: 0 3px; border: 0; border-radius: 0;
  background: #434c5e; color: #d3d6da; font: italic 12px/16px "Noto Sans", "Noto Sans CJK SC", sans-serif;
}
.search::placeholder { color: #a9aeb7; opacity: 1; }
.find-btn { margin-left: 4px; }
.login { gap: 5px; margin-left: 7px; }
.tb-right { display: flex; align-items: center; margin-left: auto; }
.cart { margin-left: 12px; }
.a360 { gap: 6px; margin-left: 8px; }
.divider { width: 1px; height: 18px; margin: 0 8px 0 10px; background: #3b4453; }
.help { gap: 9px; }
.q { width: 18px; height: 18px; border-radius: 50%; background: #dcdcdc; color: #4a515b; font-weight: bold; line-height: 18px; text-align: center; }
.win { display: flex; gap: 13px; margin: 0 9px 0 73px; }

.rtabs { display: flex; gap: 2px; margin: 3px 0 0 5px; height: 21px; color: #b4b8be; }
.rtab { padding: 0 9px; height: 21px; }
.rtab.on { background: #3b4453; color: #eceef0; }
.rmin { gap: 4px; margin-left: 20px; }

.ribbon { display: flex; align-items: stretch; margin: 0 3px; background: #3b4453; }
.panel { display: flex; flex-direction: column; justify-content: space-between; height: 104px; box-sizing: border-box; border-right: 2px solid #2f3744; color: #d3d6da; }
.draw { width: 224px; }
.modify { width: 140px; }
.annotate { width: 132px; border-right: 0; }
.title { gap: 6px; padding-bottom: 1px; }
.tools { display: flex; padding-left: 1px; }
.big { display: flex; flex-direction: column; align-items: center; width: 43px; padding-top: 6px; }
.big span { margin-top: 3px; }
.big .caret { margin-top: 4px; }
.smalls { display: flex; flex-direction: column; padding: 4px 0 0 7px; }
.small { gap: 8px; height: 26px; justify-content: flex-start; }
.annotate .tools { padding-left: 4px; }
.annotate .big { width: 44px; }
.annotate .smalls { padding-left: 2px; }
.mgrid { display: grid; grid-template-columns: 28px 31px 31px 8px 40px; grid-auto-rows: 26px; padding-top: 4px; }
.folded { display: flex; gap: 2px; padding: 2px 2px 1px; background: #2f3744; }
.fold { display: flex; flex-direction: column; align-items: center; width: 62px; padding: 4px 0 4px; background: #4e5a6c; color: #e0e2e5; }
.fold span { margin-top: 3px; }
.fold .caret { margin-top: auto; }

.ftabs { display: flex; align-items: flex-start; height: 27px; margin: 0 3px; padding: 5px 0 0 14px; background: linear-gradient(#3b4453, #3b4453) bottom / 100% 4px no-repeat; color: #a9aeb6; }
.ftab { position: relative; display: flex; align-items: center; height: 24px; text-align: left; }
.ftab span, .ftab b, .ftab .x { position: relative; }
.ftab b { color: #f1f2f4; }
.shape { position: absolute; inset: 0; width: 100%; height: 100%; }
.start { width: 142px; padding-left: 19px; }
.drawing { width: 146px; margin-left: -10px; padding: 0 22px 0 18px; justify-content: space-between; }
.add { margin-left: -2px; }

.canvas { position: relative; flex: 1; min-height: 456px; border-bottom: 1px solid #4a525f; }
.grid { position: absolute; inset: 0; width: 100%; height: 100%; fill: none; overflow: hidden; }
.vp-label { position: relative; padding: 5px; color: #d8dadd; }
.vp-win { position: absolute; top: 9px; right: 12px; display: flex; gap: 9px; }
.viewcube {
  position: absolute; top: 39px; right: 18px; width: 77px; height: 77px; box-sizing: border-box; border: 8px solid #434a53; border-radius: 50%;
  display: flex; flex-direction: column; align-items: center; justify-content: space-between; color: #b9bcbf; font-size: 12px; line-height: 14px;
}
.viewcube > span { margin: -11px 0; }
.viewcube > span:last-child { margin-bottom: -13px; }
.mid { display: flex; align-items: center; gap: 14px; }
.cube { width: 33px; height: 33px; background: #999da1; border: 1px solid #b7b9bc; color: #5b6168; font-size: 19px; line-height: 28px; }
.wcs { position: absolute; top: 134px; right: 32px; display: flex; align-items: center; gap: 4px; height: 17px; padding: 0 3px; border-radius: 5px; background: #9799a6; color: #5a5d69; font-family: "Liberation Sans", sans-serif; font-size: 12px; }
.navbar { position: absolute; top: 176px; right: 5px; height: 219px; border-radius: 4px; background: #5a6065; }
.ucs { position: absolute; left: 9px; bottom: 4px; overflow: visible; }

.mark { position: absolute; left: 679px; top: 97px; display: flex; flex-direction: column; color: #ee1c25; }
.mark strong { font: bold 19px/26px "DejaVu Sans Mono", "Noto Sans CJK SC", monospace; }
.mark em { margin-top: 2px; font: bold 15px/20px "Liberation Serif", serif; }

.menu { position: absolute; left: 300px; top: 35px; width: 225px; box-sizing: border-box; border: 1px solid #d0d0d0; padding: 1px; background: #f0f0f0; color: #111; box-shadow: 2px 2px 2px rgba(0, 0, 0, .5); }
.item { display: flex; align-items: center; width: 100%; height: 22px; text-align: left; color: #111; }
.item:disabled { color: #858585; }
.item.active { background: #91c9f7; }
.gutter { display: flex; justify-content: center; width: 24px; margin-right: 7px; color: #888; }
.text { flex: 1; }
.key { margin-right: 17px; }
.sub { margin-right: 9px; }
.menu hr { height: 1px; margin: 1px 0 2px 28px; border: 0; background: #d7d7d7; }
.frame { position: absolute; left: 1px; bottom: 0; width: 90px; height: 22px; border: 2px solid #ed1c24; }

.cmd { position: absolute; left: 219px; bottom: 1px; width: 641px; height: 27px; display: flex; }
.cmd-handle { display: flex; align-items: center; gap: 5px; width: 58px; padding-left: 3px; box-sizing: border-box; background: #272e39; }
.cmd-handle button:last-child { margin-left: 5px; }
.cmd-box { display: flex; align-items: center; flex: 1; padding: 0 6px 0 4px; background: #bbbdc0; border-radius: 0 2px 2px 0; }
.recent { gap: 1px; }
.cmd-box input { flex: 1; min-width: 0; margin-left: 8px; padding: 0; border: 0; background: none; font: italic 13px/16px "Noto Sans", "Noto Sans CJK SC", sans-serif; color: #222; }
.cmd-box input::placeholder { color: #6c6e71; opacity: 1; }
.wechat { position: absolute; right: 34px; bottom: -3px; display: flex; align-items: center; gap: 6px; color: #fff; font-size: 26px; line-height: 34px; }

.footer { display: flex; justify-content: space-between; height: 32px; margin: 0 4px 0 3px; }
.ltabs { display: flex; margin-left: 3px; color: #a9aeb6; }
.ltab { position: relative; display: flex; align-items: center; justify-content: center; width: 66px; height: 19px; }
.ltab + .ltab { margin-left: -7px; }
.ltab.on + .ltab { margin-left: -12px; }
.ltab.on { z-index: 1; color: #f1f2f4; }
.ltab span, .ltab b { position: relative; }
.ltabs .ltab.plus { width: 24px; margin-left: 1px; }
.status { display: flex; gap: 3px; padding-top: 1px; height: 25px; }
.set { display: flex; background: #3b4453; }
.cell { position: relative; display: flex; align-items: center; justify-content: center; height: 25px; background: #3b4453; color: #dcdcdc; }
.cell.on { background: #5b8cc2; }
.on + .on { margin-left: 1px; }
.white { color: #fff; }
.badge { position: absolute; top: 4px; right: 2px; }
.w18 { width: 18px; }
.w24 { width: 24px; }
.w26 { width: 26px; }
.w32 { width: 32px; }
.w36 { width: 36px; gap: 4px; }
.w43 { width: 43px; gap: 9px; }
.ratio { font-size: 12px; }
.model { color: #f0f0f0; }
.tail { border-left: 3px solid #2f3744; padding-left: 1px; }
</style>
